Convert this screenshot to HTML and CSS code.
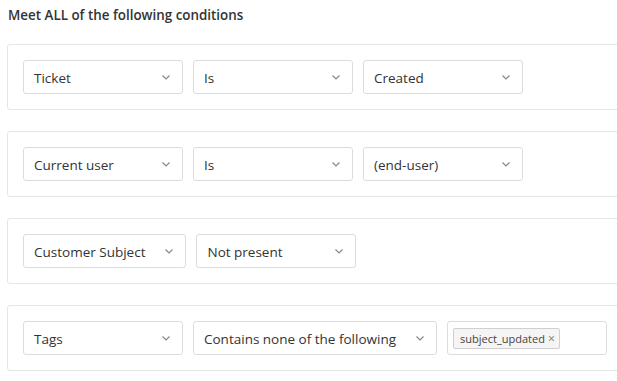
FILE: index.html
```html
<!DOCTYPE html>
<html>
<head>
<meta charset="utf-8">
<link rel="stylesheet" href="styles.css">
</head>
<body>
<div class="page">
  <h2 class="title">Meet ALL of the following conditions</h2>
  <div class="cards">
    <div class="card">
      <div class="select"><span>Ticket</span><svg class="chev" viewBox="0 0 8 5"><path d="M0.5 0.5 L4 4 L7.5 0.5"/></svg></div>
      <div class="select"><span>Is</span><svg class="chev" viewBox="0 0 8 5"><path d="M0.5 0.5 L4 4 L7.5 0.5"/></svg></div>
      <div class="select"><span>Created</span><svg class="chev" viewBox="0 0 8 5"><path d="M0.5 0.5 L4 4 L7.5 0.5"/></svg></div>
    </div>
    <div class="card">
      <div class="select"><span>Current user</span><svg class="chev" viewBox="0 0 8 5"><path d="M0.5 0.5 L4 4 L7.5 0.5"/></svg></div>
      <div class="select"><span>Is</span><svg class="chev" viewBox="0 0 8 5"><path d="M0.5 0.5 L4 4 L7.5 0.5"/></svg></div>
      <div class="select"><span>(end-user)</span><svg class="chev" viewBox="0 0 8 5"><path d="M0.5 0.5 L4 4 L7.5 0.5"/></svg></div>
    </div>
    <div class="card">
      <div class="select"><span>Customer Subject</span><svg class="chev" viewBox="0 0 8 5"><path d="M0.5 0.5 L4 4 L7.5 0.5"/></svg></div>
      <div class="select"><span>Not present</span><svg class="chev" viewBox="0 0 8 5"><path d="M0.5 0.5 L4 4 L7.5 0.5"/></svg></div>
    </div>
    <div class="card">
      <div class="select"><span>Tags</span><svg class="chev" viewBox="0 0 8 5"><path d="M0.5 0.5 L4 4 L7.5 0.5"/></svg></div>
      <div class="select"><span>Contains none of the following</span><svg class="chev" viewBox="0 0 8 5"><path d="M0.5 0.5 L4 4 L7.5 0.5"/></svg></div>
      <div class="tagfield"><span class="tag">subject_updated<span class="x">×</span></span></div>
    </div>
  </div>
</div>
</body>
</html>
```
FILE: styles.css
```css
html, body {
  margin: 0;
  padding: 0;
  background: #fff;
  overflow: hidden;
}
body {
  font-family: "Open Sans", "Noto Sans", "DejaVu Sans", sans-serif;
  color: #333;
}
.page {
  padding: 6px 0 0 7px;
}
.title {
  margin: 0 0 0 1px;
  font-size: 13.4px;
  font-weight: 600;
  line-height: 18px;
  color: #333;
}
.cards {
  margin-top: 20px;
  margin-right: -20px;
  display: flex;
  flex-direction: column;
  gap: 21px;
}
.card {
  border: 1px solid #e6e6e6;
  border-radius: 3px;
  padding: 15px;
  display: flex;
  gap: 10px;
  align-items: center;
}
.select {
  box-sizing: border-box;
  min-width: 160px;
  height: 34px;
  border: 1px solid #dcdcdc;
  border-radius: 3px;
  padding: 1px 10px 0 10px;
  display: flex;
  align-items: center;
  justify-content: space-between;
  gap: 20px;
  font-size: 13.5px;
  color: #333;
}
.chev {
  width: 8px;
  height: 5px;
  fill: none;
  stroke: #888;
  stroke-width: 1.2;
  margin-right: 2px;
}
.tagfield {
  box-sizing: border-box;
  width: 160px;
  height: 34px;
  border: 1px solid #dcdcdc;
  border-radius: 3px;
  padding: 0 5px;
  display: flex;
  align-items: center;
}
.tag {
  display: inline-flex;
  align-items: center;
  height: 21px;
  box-sizing: border-box;
  padding: 0 4px 0 6px;
  border: 1px solid #cfcfcf;
  border-radius: 2px;
  background: #f5f5f5;
  font-size: 11px;
  color: #444;
}
.x {
  margin-left: 3px;
  color: #777;
  font-size: 12px;
}
```
